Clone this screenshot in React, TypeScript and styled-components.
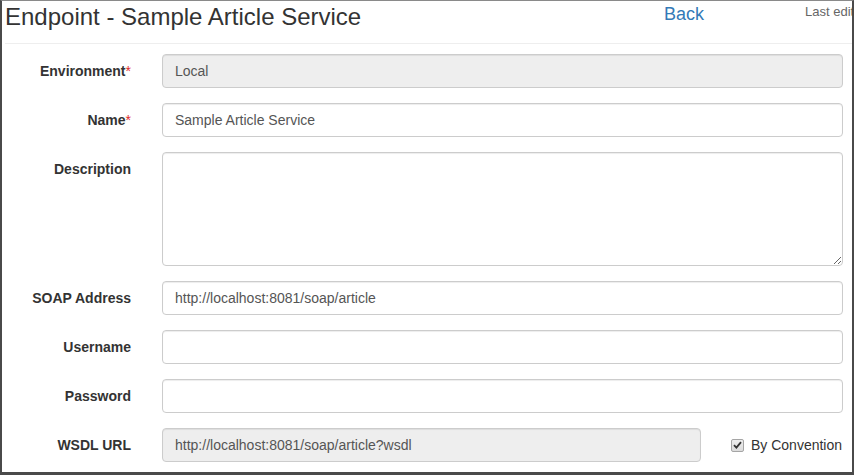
import React from "react";
import styled, { createGlobalStyle } from "styled-components";

const GlobalStyle = createGlobalStyle`
  html, body { margin: 0; padding: 0; background: #fff; }
  body { font-family: "Liberation Sans", Arial, Helvetica, sans-serif; font-size: 14px; line-height: 1.42857; color: #333; }
  * { box-sizing: border-box; }
`;

const Frame = styled.div`
  width: 854px;
  height: 475px;
  overflow: hidden;
  border-top: 1px solid #8a8a8a;
  border-left: 2px solid #4a4a4a;
  border-right: 2px solid #4a4a4a;
  border-bottom: 3px solid #4a4a4a;
  background: #fff;
`;

const Header = styled.div`
  display: grid;
  grid-template-columns: 657px 141px 1fr;
  height: 43px;
  padding-left: 2px;
  border-bottom: 1px solid #eee;
  margin-left: 3px;
  white-space: nowrap;
`;

const Title = styled.h3`
  margin: 3px 0 0 -2px;
  font-size: 24px;
  line-height: 26px;
  font-weight: 400;
  color: #333;
`;

const BackLink = styled.a`
  margin-top: 3px;
  font-size: 18px;
  line-height: 20px;
  color: #337ab7;
  text-decoration: none;
`;

const Meta = styled.div`
  margin-top: 3px;
  font-size: 13px;
  line-height: 15px;
  color: #666;
  overflow: hidden;
`;

const Form = styled.form`
  display: flex;
  flex-direction: column;
  gap: 15px;
  padding-top: 10px;
`;

const Row = styled.div`
  display: grid;
  grid-template-columns: 129px 681px;
  column-gap: 31px;
  align-items: start;
`;

const Label = styled.label`
  padding-top: 7px;
  text-align: right;
  font-weight: 700;
  font-size: 14px;
  line-height: 20px;
  color: #333;
`;

const Req = styled.span`
  color: #e02a2a;
  font-weight: 400;
`;

const Input = styled.input<{ $narrow?: boolean }>`
  display: block;
  width: ${(p) => (p.$narrow ? "539px" : "100%")};
  height: 34px;
  padding: 6px 12px;
  font-family: "Liberation Sans", Arial, sans-serif;
  font-size: 14px;
  line-height: 20px;
  color: #555;
  background: #fff;
  border: 1px solid #ccc;
  border-radius: 4px;
  box-shadow: inset 0 1px 1px rgba(0, 0, 0, 0.075);
  outline: none;
  &:disabled {
    background: #eee;
    opacity: 1;
    color: #555;
  }
`;

const TextArea = styled.textarea`
  display: block;
  width: 100%;
  height: 114px;
  padding: 6px 12px;
  font-family: "Liberation Sans", Arial, sans-serif;
  font-size: 14px;
  line-height: 20px;
  color: #555;
  border: 1px solid #ccc;
  border-radius: 4px;
  box-shadow: inset 0 1px 1px rgba(0, 0, 0, 0.075);
  outline: none;
  resize: vertical;
`;

const InlineGroup = styled.div`
  display: flex;
  align-items: center;
  height: 34px;
`;

const CheckLabel = styled.label`
  display: flex;
  align-items: center;
  gap: 7px;
  margin-left: 30px;
  font-size: 14px;
  line-height: 20px;
  color: #333;
`;

const CheckBox = styled.span`
  display: inline-flex;
  align-items: center;
  justify-content: center;
  width: 13px;
  height: 13px;
  border: 1px solid #a5a5a5;
  border-radius: 2px;
  background: linear-gradient(#ededed, #dcdcdc);
`;

export default function App() {
  return (
    <>
      <GlobalStyle />
      <Frame>
        <Header>
          <Title>Endpoint - Sample Article Service</Title>
          <BackLink href="#">Back</BackLink>
          <Meta>Last edited by admin</Meta>
        </Header>
        <Form>
          <Row>
            <Label>
              Environment<Req>*</Req>
            </Label>
            <Input disabled defaultValue="Local" />
          </Row>
          <Row>
            <Label>
              Name<Req>*</Req>
            </Label>
            <Input defaultValue="Sample Article Service" />
          </Row>
          <Row>
            <Label>Description</Label>
            <TextArea rows={5} />
          </Row>
          <Row>
            <Label>SOAP Address</Label>
            <Input defaultValue="http://localhost:8081/soap/article" />
          </Row>
          <Row>
            <Label>Username</Label>
            <Input />
          </Row>
          <Row>
            <Label>Password</Label>
            <Input type="password" />
          </Row>
          <Row>
            <Label>WSDL URL</Label>
            <InlineGroup>
              <Input $narrow disabled defaultValue="http://localhost:8081/soap/article?wsdl" />
              <CheckLabel>
                <CheckBox>
                  <svg width="9" height="8" viewBox="0 0 9 8">
                    <path d="M1 4.2 L3.4 6.6 L8 1.2" fill="none" stroke="#333" strokeWidth="1.8" />
                  </svg>
                </CheckBox>
                By Convention
              </CheckLabel>
            </InlineGroup>
          </Row>
        </Form>
      </Frame>
    </>
  );
}
